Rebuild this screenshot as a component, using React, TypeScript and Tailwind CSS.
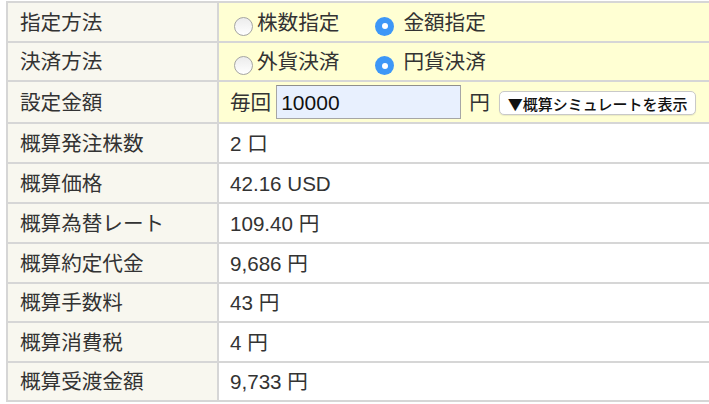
import React from "react";

const font = { fontFamily: '"Liberation Sans", "Noto Sans CJK JP", sans-serif' };

function Radio({ checked }: { checked?: boolean }) {
  if (checked) {
    return (
      <span className="shrink-0 flex items-center justify-center w-[19px] h-[19px] rounded-full bg-[#3d97f7] translate-y-[3px]">
        <span className="w-[6px] h-[6px] rounded-full bg-white" />
      </span>
    );
  }
  return (
    <span className="shrink-0 block w-[19px] h-[19px] rounded-full bg-gradient-to-b from-[#ececec] to-white border border-[#a4a4a4] translate-y-[3px]" />
  );
}

function Row({
  label,
  h,
  yellow,
  children,
}: {
  label: string;
  h: string;
  yellow?: boolean;
  children: React.ReactNode;
}) {
  return (
    <div className={`flex border-b-2 border-[#d6d6d6] ${h}`}>
      <div className="w-[211px] shrink-0 border-r-2 border-[#d6d6d6] bg-[#f8f7ef] flex items-center pl-[12px] pt-[2px]">
        {label}
      </div>
      <div
        className={`flex-1 flex items-center pl-[11px] pt-[2px] ${yellow ? "bg-[#ffffd3]" : "bg-white"}`}
      >
        {children}
      </div>
    </div>
  );
}

export default function App() {
  return (
    <div className="w-[709px] h-[404px] overflow-hidden bg-white" style={font}>
      <div className="ml-[6px] mt-[1px] w-[760px] border-t-2 border-l-2 border-[#d6d6d6] text-[20.6px] text-[#333] leading-none">
        <Row label="指定方法" h="h-[40px]" yellow>
          <span className="flex items-center ml-[4px]">
            <Radio />
            <span className="ml-[4px]">株数指定</span>
          </span>
          <span className="flex items-center ml-[36px]">
            <Radio checked />
            <span className="ml-[9px]">金額指定</span>
          </span>
        </Row>
        <Row label="決済方法" h="h-[39px]" yellow>
          <span className="flex items-center ml-[4px]">
            <Radio />
            <span className="ml-[4px]">外貨決済</span>
          </span>
          <span className="flex items-center ml-[36px]">
            <Radio checked />
            <span className="ml-[9px]">円貨決済</span>
          </span>
        </Row>
        <Row label="設定金額" h="h-[42px]" yellow>
          <span>毎回</span>
          <span className="ml-[5px] w-[185px] h-[34px] bg-[#e8f0fe] border border-[#a6a6a6] border-t-[#8e8e8e] flex items-center pl-[4px] text-[#111] text-[21px] -translate-y-[1px]">
            10000
          </span>
          <span className="ml-[8px]">円</span>
          <span
            className="ml-[9px] h-[24px] pl-[8px] pr-[8px] bg-white border border-[#c9c9c9] rounded-[5px] flex items-center text-[15px] text-[#111] font-medium shadow-[0_1px_1px_rgba(0,0,0,0.08)] whitespace-nowrap"
            style={{ fontFamily: '"Noto Sans CJK JP", sans-serif' }}
          >
            ▼概算シミュレートを表示
          </span>
        </Row>
        <Row label="概算発注株数" h="h-[40px]">2 口</Row>
        <Row label="概算価格" h="h-[40px]">42.16 USD</Row>
        <Row label="概算為替レート" h="h-[40px]">109.40 円</Row>
        <Row label="概算約定代金" h="h-[40px]">9,686 円</Row>
        <Row label="概算手数料" h="h-[39px]">43 円</Row>
        <Row label="概算消費税" h="h-[40px]">4 円</Row>
        <Row label="概算受渡金額" h="h-[39px]">9,733 円</Row>
      </div>
    </div>
  );
}
